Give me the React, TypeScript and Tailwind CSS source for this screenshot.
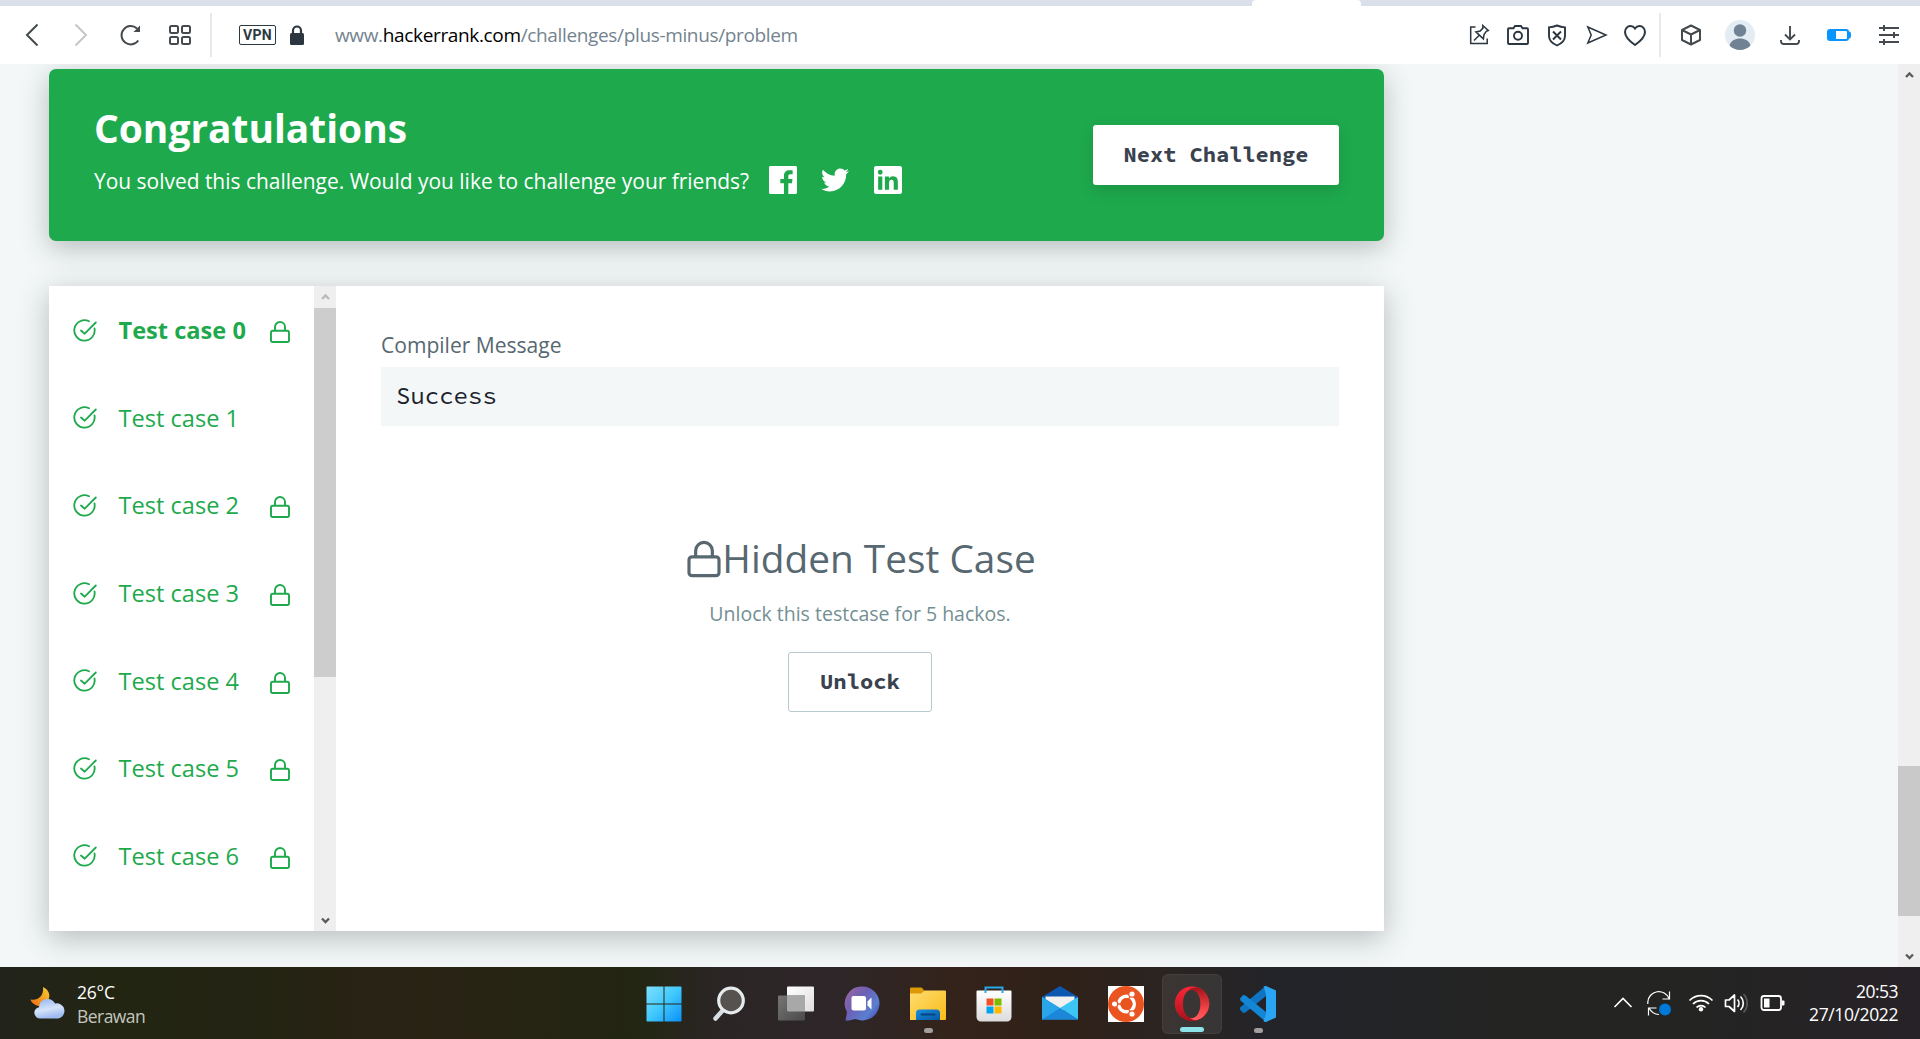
import type { ReactNode } from "react";

const sans = "font-['Open_Sans','Noto_Sans',sans-serif]";
const mono = "font-['Source_Code_Pro','Noto_Sans_Mono','DejaVu_Sans_Mono',monospace]";

function Stroke({
  children,
  className = "",
  width = 2,
  size = 24,
}: {
  children: ReactNode;
  className?: string;
  width?: number;
  size?: number;
}) {
  return (
    <svg
      width={size}
      height={size}
      viewBox="0 0 24 24"
      fill="none"
      stroke="currentColor"
      strokeWidth={width}
      className={`shrink-0 ${className}`}
    >
      {children}
    </svg>
  );
}

function TabStrip() {
  return (
    <div className="flex h-[6px] shrink-0 bg-[#d9e0e9] pl-[1252px]">
      <div className="h-full w-[109px] rounded-t-sm bg-white" />
    </div>
  );
}

function BrowserBar() {
  return (
    <div className="flex h-[58px] shrink-0 items-center bg-white text-[#444a4d]">
      <Stroke className="ml-5">
        <path d="M17.5 1.5 7 12l10.5 10.5" />
      </Stroke>
      <Stroke className="ml-[25px] text-[#c4c6c8]">
        <path d="M6.5 1.5 17 12 6.5 22.5" />
      </Stroke>
      <Stroke className="ml-[25px]">
        <path d="M20.3 17.5a9.200 9.200 0 1 1-1.300-12" />
        <path d="M22 2.5v6.500h-6.500z" fill="currentColor" stroke="none" />
      </Stroke>
      <Stroke className="ml-[26px]">
        <rect x="2" y="3" width="8" height="7" rx="1.5" />
        <rect x="14" y="3" width="8" height="7" rx="1.5" />
        <rect x="2" y="14" width="8" height="7" rx="1.5" />
        <rect x="14" y="14" width="8" height="7" rx="1.5" />
      </Stroke>
      <div className="ml-[18px] h-11 w-[2px] bg-[#e8e9ea]" />
      <div className="ml-[27px] flex h-5 w-[37px] items-center justify-center rounded-[2px] border border-[#2b3942] font-['Roboto',sans-serif] text-[14px] font-bold leading-none tracking-[0.4px] text-[#2b3942]">
        VPN
      </div>
      <svg width="14" height="20" viewBox="0 0 14 20" className="ml-[14px] shrink-0">
        <path d="M3 9V5.500a4 4 0 0 1 8 0V9" fill="none" stroke="#2b3640" strokeWidth="2.2" />
        <rect y="8" width="14" height="12" rx="1.5" fill="#2b3640" />
      </svg>
      <div className={`ml-[31px] w-[1135px] ${sans} text-[19px] leading-6 tracking-[-0.35px] text-[#74838f]`}>
        www.<span className="text-black">hackerrank.com</span>/challenges/plus-minus/problem
      </div>
      <div className="ml-[-3px] flex gap-[15px] text-[#2b3640]">
        <Stroke width={1.5}>
          <path d="M8.5 4H3.7v16.500h16.500v-5" />
          <path d="m15.800 2.500 5.500 5-2 .8-2.300 3.200-.6 4.400-7.500-7 4.300-.8 2.700-3zM12 12.500l-5 5" />
        </Stroke>
        <Stroke width={1.9}>
          <path d="M3 5.200h4.500L9 3h6l1.500 2.200H21a1 1 0 0 1 1 1V20a1 1 0 0 1-1 1H3a1 1 0 0 1-1-1V6.200a1 1 0 0 1 1-1z" />
          <circle cx="12" cy="12.8" r="4" />
        </Stroke>
        <Stroke width={1.9}>
          <path d="M12 2.500c3 1.200 5.500 1.700 8 1.900V13c0 4.500-3.500 7.500-8 9.500C7.500 20.500 4 17.500 4 13V4.400c2.500-.2 5-.7 8-1.900z" />
          <path d="m8 8.500 8 8M16 8.500l-8 8" />
        </Stroke>
        <Stroke width={1.5}>
          <path d="M3.800 4 22 12 3.800 20 7.200 12z" />
        </Stroke>
        <Stroke width={2}>
          <path d="M12 22C7 18.500 2 14 2 9c0-3.200 2.300-6 5.400-6C9.500 3 11 4 12 5.500 13 4 14.500 3 16.600 3 19.700 3 22 5.800 22 9c0 5-5 9.500-10 13z" />
        </Stroke>
      </div>
      <div className="ml-3 h-11 w-[2px] shrink-0 bg-[#e8e9ea]" />
      <Stroke className="ml-[18px]">
        <path d="M12 2.500 21 7v10l-9 4.500L3 17V7zM3 7l9 4.500L21 7M12 11.500v10" strokeLinejoin="round" />
      </Stroke>
      <svg width="30" height="30" viewBox="0 0 30 30" className="ml-[22px] shrink-0">
        <circle cx="15" cy="15" r="15" fill="#e3ebf3" />
        <circle cx="15" cy="10.5" r="6.2" fill="#708294" />
        <path d="M4.500 25.500C6 20.500 10 18.500 15 18.500s9 2 10.500 7A15 15 0 0 1 15 30a15 15 0 0 1-10.500-4.500z" fill="#708294" />
      </svg>
      <Stroke className="ml-[23px]" width={1.9}>
        <path d="M12 3v13M7 11.500l5 5 5-5M3 17v1.500a2.500 2.500 0 0 0 2.500 2.500h13a2.500 2.500 0 0 0 2.500-2.500V17" />
      </Stroke>
      <svg width="24" height="24" viewBox="0 0 24 24" className="ml-[25px] shrink-0">
        <rect x="1" y="7" width="20" height="10" rx="2" fill="none" stroke="#0a94ff" strokeWidth="2" />
        <path d="M1 7h8v10H1zM22 8.500h.5c1 0 1.500 1 1.500 3.500s-.5 3.500-1.500 3.500H22z" fill="#0a94ff" />
      </svg>
      <Stroke className="ml-[26px]">
        <path d="M2 5h20M2 12h20M2 19h20M7 2v6M17 9v6M7 16v6" />
      </Stroke>
    </div>
  );
}

function Chevron({ down = false, color }: { down?: boolean; color: string }) {
  return (
    <svg width="22" height="22" viewBox="0 0 22 22" className="shrink-0">
      <path
        d={down ? "M8 9.500 11.500 13 15 9.500" : "M8 13 11.500 9.500 15 13"}
        fill="none"
        stroke={color}
        strokeWidth="2.3"
      />
    </svg>
  );
}

function CheckIcon() {
  return (
    <svg width="24" height="24" viewBox="0 0 24 24" fill="none" stroke="currentColor" strokeWidth="1.8" strokeLinecap="round" strokeLinejoin="round" className="mt-[2px] shrink-0">
      <path d="M21.500 9.500A10.200 10.200 0 1 1 16 2.300" />
      <path d="M8 11.500 11.700 14.700 22.800 3.500" />
    </svg>
  );
}

function LockIcon({ size = 24, width = 1.9 }: { size?: number; width?: number }) {
  return (
    <Stroke size={size} width={width}>
      <rect x="3" y="10.7" width="18" height="11.3" rx="1.8" />
      <path d="M7 10.700V7a5 5 0 0 1 10 0v3.700" />
    </Stroke>
  );
}

function Banner() {
  return (
    <section className="flex h-[172px] items-center justify-between rounded-[7px] bg-[#1ea94d] px-[45px] text-white shadow-[0_7px_28px_rgba(40,50,50,0.3)]">
      <div className="h-[172px]">
        <h1 className="mt-[35px] text-[38.9px] font-bold leading-[48px]">Congratulations</h1>
        <div className="mt-[13px] flex h-[29px] items-center">
          <p className="mt-[3px] text-[20.95px] leading-7">
            You solved this challenge. Would you like to challenge your friends?
          </p>
          <svg width="28" height="28" viewBox="0 0 24 24" fill="currentColor" className="ml-5">
            <path d="M22.676 0H1.324C.593 0 0 .593 0 1.324v21.352C0 23.408.593 24 1.324 24h11.494v-9.294H9.689v-3.621h3.129V8.410c0-3.099 1.894-4.785 4.659-4.785 1.325 0 2.464.097 2.796.141v3.240h-1.921c-1.500 0-1.792.721-1.792 1.771v2.311h3.584l-.465 3.630H16.560V24h6.115c.733 0 1.325-.592 1.325-1.324V1.324C24 .593 23.408 0 22.676 0" />
          </svg>
          <svg width="28" height="28" viewBox="0 0 24 24" fill="currentColor" className="ml-6">
            <path d="M23.954 4.569c-.885.389-1.830.654-2.825.775 1.014-.611 1.794-1.574 2.163-2.723-.951.555-2.005.959-3.127 1.184-.896-.959-2.173-1.559-3.591-1.559-2.717 0-4.920 2.203-4.920 4.917 0 .390.045.765.127 1.124C7.691 8.094 4.066 6.130 1.640 3.161c-.427.722-.666 1.561-.666 2.475 0 1.710.870 3.213 2.188 4.096-.807-.026-1.566-.248-2.228-.616v.061c0 2.385 1.693 4.374 3.946 4.827-.413.111-.849.171-1.296.171-.314 0-.615-.030-.916-.086.631 1.953 2.445 3.377 4.604 3.417-1.680 1.319-3.809 2.105-6.102 2.105-.390 0-.779-.023-1.170-.067 2.189 1.394 4.768 2.209 7.557 2.209 9.054 0 13.999-7.496 13.999-13.986 0-.209 0-.420-.015-.630.961-.689 1.800-1.560 2.460-2.548z" />
          </svg>
          <svg width="28" height="28" viewBox="0 0 24 24" fill="currentColor" className="ml-[25px]">
            <path d="M20.447 20.452h-3.554v-5.569c0-1.328-.027-3.037-1.852-3.037-1.853 0-2.136 1.445-2.136 2.939v5.667H9.351V9h3.414v1.561h.046c.477-.9 1.637-1.850 3.370-1.850 3.601 0 4.267 2.370 4.267 5.455v6.286zM5.337 7.433a2.062 2.062 0 0 1-2.063-2.065 2.064 2.064 0 1 1 2.063 2.065zm1.782 13.019H3.555V9h3.564v11.452zM22.225 0H1.771C.792 0 0 .774 0 1.729v20.542C0 23.227.792 24 1.771 24h20.451C23.200 24 24 23.227 24 22.271V1.729C24 .774 23.200 0 22.222 0h.003z" />
          </svg>
        </div>
      </div>
      <button className={`h-[60px] w-[246px] rounded-[3px] bg-white pb-[2px] ${mono} text-[22px] font-bold leading-none text-[#39424e] shadow-[0_6px_16px_rgba(0,0,0,0.12)]`}>
        Next Challenge
      </button>
    </section>
  );
}

const cases = [0, 1, 2, 3, 4, 5, 6];

function Results() {
  return (
    <section className="mt-[45px] flex h-[645px] bg-white shadow-[0_7px_28px_rgba(40,50,50,0.3)]">
      <ul className="w-[265px] text-[#1ea94d]">
        {cases.map((n) => (
          <li key={n} className="flex h-[87.6px] items-center pl-[23.5px]">
            <CheckIcon />
            <span className={n === 0 ? "ml-[22px] mt-[1px] w-[128px] text-[23.6px] font-bold leading-8" : "ml-[22px] mt-[1px] w-[128px] text-[23.6px] leading-8"}>
              Test case {n}
            </span>
            {n !== 1 && (
              <span className="ml-[21.5px] mt-[5px]">
                <LockIcon />
              </span>
            )}
          </li>
        ))}
      </ul>
      <div className="flex w-[22px] flex-col bg-[#efefef]">
        <Chevron color="#b9b9b9" />
        <div className="h-[369px] bg-[#cdcdcd]" />
        <div className="flex-1" />
        <Chevron down color="#5a5a5a" />
      </div>
      <div className="flex-1 px-[45px] pt-[45px]">
        <h2 className="text-[21.05px] leading-[29px] text-[#576871]">Compiler Message</h2>
        <pre className={`mt-[7px] h-[59px] bg-[#f3f7f7] pl-[15px] ${mono} text-[24px] leading-[58px] text-[#1c222c]`}>Success</pre>
        <div className="mt-[102px] flex flex-col items-center">
          <div className="flex h-[60px] items-center text-[#576871]">
            <span className="mt-[1px]">
              <LockIcon size={40} />
            </span>
            <span className="ml-[-2px] text-[38.8px] leading-[60px]">Hidden Test Case</span>
          </div>
          <p className="mt-[12px] text-[19.5px] leading-7 text-[#738f93]">Unlock this testcase for 5 hackos.</p>
          <button className={`mt-[24px] h-[60px] w-[144px] rounded-[3px] border border-[#b7c9cc] pb-[2px] ${mono} text-[22.2px] font-bold leading-none text-[#39424e]`}>
            Unlock
          </button>
        </div>
      </div>
    </section>
  );
}

function AppSlot({ children, running = false, active = false }: { children: ReactNode; running?: boolean; active?: boolean }) {
  return (
    <div
      className={
        active
          ? "relative mx-[3px] flex h-[60px] w-[60px] items-center justify-center rounded-[6px] border border-white/5 bg-white/8"
          : "relative mx-[3px] flex h-[60px] w-[60px] items-center justify-center"
      }
    >
      <svg width="36" height="36" viewBox="0 0 36 36">
        {children}
      </svg>
      {active && <div className="absolute bottom-[1px] h-[5px] w-6 rounded-full bg-[#8de3e8]" />}
      {running && <div className="absolute bottom-[1px] h-[5px] w-[9px] rounded-full bg-[#a29e9d]" />}
    </div>
  );
}

function Taskbar() {
  return (
    <footer className="flex h-[72px] shrink-0 items-start bg-[linear-gradient(90deg,#22231b_0,#232513_110px,#232413_250px,#2a2315_400px,#232613_640px,#2b2526_720px,#2e2628_840px,#33231a_950px,#302118_1060px,#2b2421_1160px,#22242a_1290px,#242423_1500px,#242423_1700px,#272227_1920px)]">
      <div className={`flex w-[631px] pl-[30px] ${sans}`}>
        <svg width="36" height="36" viewBox="0 0 36 36" className="mt-[18px]">
          <defs>
            <linearGradient id="moon" x1="0" y1="1" x2="1" y2="0">
              <stop offset="0" stopColor="#ee6a10" />
              <stop offset="1" stopColor="#f8cf35" />
            </linearGradient>
            <linearGradient id="cloud" x1="0" y1="0" x2="0.3" y2="1">
              <stop offset="0" stopColor="#8fb4f2" />
              <stop offset="0.6" stopColor="#d5e3fa" />
              <stop offset="1" stopColor="#9fbcf0" />
            </linearGradient>
          </defs>
          <path d="M13 2c6 3 8 8 5 14-3 5-9 7-14 3C2 18 1 16 .5 14.500 9 16 14 10 13 2z" fill="url(#moon)" />
          <path d="M10 33.500a5.700 5.700 0 0 1-1-11.300A8.500 8.500 0 0 1 25 18.500a7.600 7.600 0 1 1 3.500 15z" fill="url(#cloud)" />
        </svg>
        <div className="ml-[11px] mt-[13px] text-[17.5px] leading-6">
          <div className="text-white tracking-[-0.2px]">26°C</div>
          <div className="tracking-[-0.55px] text-[#c4c5bf]">Berawan</div>
        </div>
      </div>
      <div className="mt-[7px] flex w-[660px]">
        <AppSlot>
          <defs>
            <linearGradient id="win" x1="0" y1="0" x2="1" y2="1">
              <stop offset="0" stopColor="#7fe0ff" />
              <stop offset="0.5" stopColor="#40c8fd" />
              <stop offset="1" stopColor="#0a90f8" />
            </linearGradient>
          </defs>
          <path d="M1 0.500h16.500v17H0.500V1zM18.500 0.500H35l.5.5v16.500h-17zM.5 18.500h17v17H1l-.5-.5zM18.500 18.500h17V35l-.5.5H18.500z" fill="url(#win)" />
        </AppSlot>
        <AppSlot>
          <path d="M12 23 3.500 32.500" stroke="#d7dde2" strokeWidth="4.5" strokeLinecap="round" />
          <circle cx="19" cy="14.5" r="12.3" fill="#555250" stroke="#e6eaec" strokeWidth="3.2" />
        </AppSlot>
        <AppSlot>
          <defs>
            <linearGradient id="pane" x1="0" y1="0" x2="1" y2="1">
              <stop offset="0" stopColor="#fff" />
              <stop offset="1" stopColor="#dedede" />
            </linearGradient>
            <linearGradient id="paneDark" x1="0" y1="0" x2="1" y2="1">
              <stop offset="0" stopColor="#777675" />
              <stop offset="1" stopColor="#4b4a4a" />
            </linearGradient>
          </defs>
          <rect x="9" y="0.5" width="27" height="25" rx="1" fill="url(#pane)" />
          <rect x="0" y="9.5" width="27" height="25" rx="1" fill="url(#paneDark)" />
          <path d="M9 9.500h18v16H10l-1-1z" fill="#a8a8a8" />
        </AppSlot>
        <AppSlot>
          <defs>
            <linearGradient id="chat" x1="0" y1="0" x2="1" y2="0.8">
              <stop offset="0" stopColor="#a2669f" />
              <stop offset="0.45" stopColor="#6b60b5" />
              <stop offset="0.8" stopColor="#5b7fd0" />
              <stop offset="1" stopColor="#4b50bd" />
            </linearGradient>
          </defs>
          <path d="M18 .5a17 17 0 1 1-6.500 32.500C8 34 4 34.800 1.500 34.500L3 26A17 17 0 0 1 18 .5z" fill="url(#chat)" />
          <rect x="7.5" y="10" width="14.5" height="14.5" rx="2" fill="#fff" />
          <path d="M23.500 15.500 27.500 11.500v12l-4-4z" fill="#fff" />
        </AppSlot>
        <AppSlot running>
          <defs>
            <linearGradient id="folder" x1="0" y1="0" x2="1" y2="1">
              <stop offset="0" stopColor="#ffdd72" />
              <stop offset="1" stopColor="#f9bb16" />
            </linearGradient>
            <linearGradient id="folderTag" x1="0" y1="0" x2="1" y2="1">
              <stop offset="0" stopColor="#1a8fe0" />
              <stop offset="1" stopColor="#0657a5" />
            </linearGradient>
          </defs>
          <path d="M0 2.500a1 1 0 0 1 1-1h10.500L15 5v4H0z" fill="#dd9a06" />
          <path d="M0 7.500h11L15 4.500h20a1 1 0 0 1 1 1V33a1 1 0 0 1-1 1H0z" fill="url(#folder)" />
          <path d="M6 34v-7a3.500 3.500 0 0 1 3.500-3.500h17A3.500 3.500 0 0 1 30 27v7z" fill="url(#folderTag)" />
          <rect x="10.5" y="27.5" width="15" height="2" rx="1" fill="#07447e" />
        </AppSlot>
        <AppSlot>
          <defs>
            <linearGradient id="bag" x1="0" y1="0" x2="0" y2="1">
              <stop offset="0" stopColor="#fff" />
              <stop offset="1" stopColor="#dcdcdc" />
            </linearGradient>
          </defs>
          <path d="M.5 5.500a1 1 0 0 1 1-1h33a1 1 0 0 1 1 1V31a4.500 4.500 0 0 1-4.500 4.500H5A4.500 4.500 0 0 1 .5 31z" fill="url(#bag)" />
          <path d="M9.500 7V1.500h17V7" fill="none" stroke="#27a7e8" strokeWidth="2" />
          <path d="M10.500 12.500h7v7h-7z" fill="#f25022" />
          <path d="M18.500 12.500h7v7h-7z" fill="#7fba00" />
          <path d="M10.500 20.500h7v7h-7z" fill="#00a4ef" />
          <path d="M18.500 20.500h7v7h-7z" fill="#ffb900" />
        </AppSlot>
        <AppSlot>
          <path d="M0 11 18 0l18 11v10H0z" fill="#0c58b0" />
          <path d="M3.500 10.500h29V24h-29z" fill="#f1f1f1" />
          <path d="M0 11 36 33.500H0z" fill="#1f93e0" />
          <path d="M36 11v22.500L18 22z" fill="#3cc6f6" />
          <path d="M18 22 36 33.500H0z" fill="#1c87d8" />
          <path d="M0 11l18 11L0 33.500z" fill="#2aa5ea" />
        </AppSlot>
        <AppSlot>
          <path d="M0 0h36v36H0z" fill="#fff" />
          <circle cx="18" cy="18" r="18" fill="#e95420" />
          <circle cx="18.5" cy="18" r="7.8" fill="none" stroke="#fff" strokeWidth="3.5" />
          <path d="M19 18H4M18 18l7-13M18 18l7 13" stroke="#e95420" strokeWidth="1.3" />
          <circle cx="18.5" cy="18" r="6" fill="#e95420" />
          <g fill="#fff" stroke="#e95420" strokeWidth="1.2">
            <circle cx="6.5" cy="18" r="3.2" />
            <circle cx="24" cy="8" r="3.2" />
            <circle cx="24" cy="28" r="3.2" />
          </g>
        </AppSlot>
        <AppSlot active>
          <defs>
            <linearGradient id="operaLeft" x1="0" y1="0" x2="0" y2="1">
              <stop offset="0" stopColor="#ff2638" />
              <stop offset="1" stopColor="#a8121c" />
            </linearGradient>
            <linearGradient id="operaRight" x1="0" y1="0" x2="0" y2="1">
              <stop offset="0" stopColor="#a31218" />
              <stop offset="0.7" stopColor="#f7484b" />
              <stop offset="1" stopColor="#ff5e60" />
            </linearGradient>
          </defs>
          <path fillRule="evenodd" d="M18 .5a17.300 17.300 0 1 1 0 34.600 17.300 17.300 0 0 1 0-34.600zM18 3.500c-5.500 0-9 6.500-9 14.300s3.500 14.300 9 14.300 8.500-6.500 8.500-14.300S23.500 3.500 18 3.500z" fill="url(#operaLeft)" />
          <path d="M14 3.800C17 2 21 .8 24 1.800c6.500 2.500 11.300 9 11.300 16s-4.800 13.500-11.300 16c-3 1-6-.3-8-2 6 1.500 10.500-5 10.500-14S22 2.500 14 3.800z" fill="url(#operaRight)" />
        </AppSlot>
        <AppSlot running>
          <path d="M26 0v10L5.500 26.500 3 27 0 23.500v-2L25 .5z" fill="#0f74c2" />
          <path d="M0 12.500 3 9l2.500.5L26 26v10L.5 14.500z" fill="#1386d6" />
          <path d="M26 0 36 4.500v27L26 36l-2.500-.5L26 28V8L23.500.5z" fill="#2aa5f3" />
        </AppSlot>
      </div>
      <div className="ml-[321px] mt-[24px] flex h-6 items-center text-white">
        <svg width="22" height="24" viewBox="0 0 22 24" fill="none" stroke="currentColor" strokeWidth="1.6">
          <path d="M2.500 16 11 7.500l8.500 8.500" />
        </svg>
        <svg width="24" height="24" viewBox="0 0 24 24" className="ml-[13px] overflow-visible" fill="none" stroke="currentColor" strokeWidth="1.2">
          <path d="M.8 13V11A11 11 0 0 1 22 7.500M22.500.5V8H15.500M12 23.500A12 12 0 0 1 2 17M1.500 24.500V17h8" />
          <circle cx="18" cy="18.5" r="6" fill="#0078d7" stroke="none" />
        </svg>
        <svg width="26" height="24" viewBox="0 0 26 24" className="ml-[17px]" fill="none" stroke="currentColor" strokeWidth="1.7">
          <path d="M1.500 9.500a16 16 0 0 1 23 0M5 13a11.300 11.300 0 0 1 16 0M8.500 16.500a6.400 6.400 0 0 1 9 0" />
          <circle cx="13" cy="18.3" r="2.2" fill="currentColor" stroke="none" />
        </svg>
        <svg width="26" height="24" viewBox="0 0 26 24" className="ml-[10px]" fill="none" stroke="currentColor" strokeWidth="1.7">
          <path d="M1.500 9h3.500l5.500-5v16.500l-5.500-5H1.500z" strokeLinejoin="round" />
          <path d="M13.500 8.500a5.500 5.500 0 0 1 0 7.500M16.500 5.500a9.500 9.500 0 0 1 0 13.500" />
          <path d="M19.500 3a13.500 13.500 0 0 1 0 18.500" stroke="#5a5a5a" />
        </svg>
        <svg width="26" height="24" viewBox="0 0 26 24" className="ml-[10px]" fill="none" stroke="currentColor" strokeWidth="1.8">
          <rect x="1.5" y="5" width="19.5" height="14" rx="2.5" />
          <rect x="4" y="7.5" width="5.5" height="9" fill="currentColor" stroke="none" />
          <path d="M22 9.500h1.500q1 0 1 1v3q0 1-1 1H22z" fill="currentColor" stroke="none" />
        </svg>
      </div>
      <div className={`ml-auto mr-[22px] mt-[13px] text-right ${sans} text-[17.5px] leading-[23px] text-white`}>
        <div className="tracking-[-0.5px]">20:53</div>
        <div className="tracking-[-0.4px]">27/10/2022</div>
      </div>
    </footer>
  );
}

export default function App() {
  return (
    <div className="flex h-[1039px] w-[1920px] flex-col overflow-hidden bg-[#f3f7f8]">
      <TabStrip />
      <BrowserBar />
      <div className="flex h-[903px] shrink-0 overflow-hidden">
        <main className={`flex-1 overflow-hidden pl-[49px] pt-[5px] ${sans}`}>
          <div className="w-[1335px]">
            <Banner />
            <Results />
          </div>
        </main>
        <aside className="flex w-[22px] flex-col bg-[#efefef]">
          <Chevron color="#5a5a5a" />
          <div className="flex-1" />
          <div className="h-[150px] bg-[#c9c9c9]" />
          <div className="h-[29px]" />
          <Chevron down color="#5a5a5a" />
        </aside>
      </div>
      <Taskbar />
    </div>
  );
}
